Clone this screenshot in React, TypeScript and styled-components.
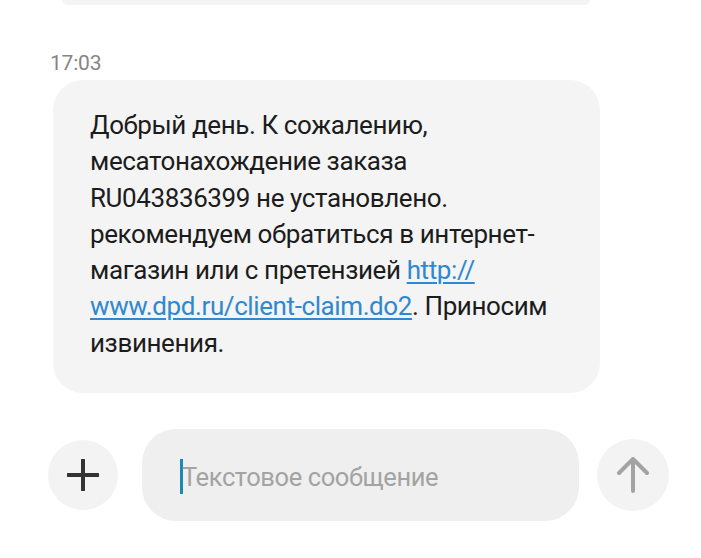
import React from "react";
import styled, { createGlobalStyle } from "styled-components";

const Global = createGlobalStyle`
  html, body { margin: 0; padding: 0; background: #ffffff; }
  body { font-family: Roboto, "Noto Sans", Arial, sans-serif; overflow: hidden; }
`;

const Screen = styled.div`
  width: 701px;
  height: 558px;
  display: flex;
  flex-direction: column;
  background: #ffffff;
`;

const PrevBubble = styled.div`
  margin-left: 62px;
  width: 528px;
  height: 5px;
  background: #f4f4f4;
  border-radius: 0 0 28px 28px;
`;

const Time = styled.div`
  margin: 44px 0 0 50px;
  font-size: 21px;
  line-height: 28px;
  color: #858585;
  letter-spacing: -0.2px;
`;

const Bubble = styled.div`
  margin: 3px 0 0 53px;
  width: 547px;
  box-sizing: border-box;
  height: 313px;
  padding: 27px 47px 0 37px;
  background: #f4f4f4;
  border-radius: 30px;
  font-size: 26px;
  line-height: 36.3px;
  color: #1c1c1c;
  letter-spacing: -0.4px;
`;

const Link = styled.a`
  color: #2f88d0;
  text-decoration: underline;
  text-underline-offset: 3px;
  text-decoration-thickness: 1.5px;
`;

const InputRow = styled.div`
  margin-top: 36px;
  display: flex;
  align-items: center;
  padding-left: 48px;
`;

const RoundButton = styled.div<{ $size: number }>`
  width: ${(p) => p.$size}px;
  height: ${(p) => p.$size}px;
  border-radius: 50%;
  background: #f3f3f3;
  display: flex;
  align-items: center;
  justify-content: center;
  flex-shrink: 0;
`;

const Field = styled.div`
  margin: 0 18px 0 24px;
  width: 437px;
  height: 92px;
  box-sizing: border-box;
  border-radius: 34px;
  background: #efefef;
  display: flex;
  align-items: center;
  padding: 3px 0 0 38px;
`;

const Caret = styled.span`
  width: 3px;
  height: 35px;
  background: #1b8ab3;
  margin-right: -1px;
`;

const Placeholder = styled.span`
  font-size: 25.5px;
  color: #a3a3a3;
  letter-spacing: -0.4px;
`;

export default function App() {
  return (
    <>
      <Global />
      <Screen>
        <PrevBubble />
        <Time>17:03</Time>
        <Bubble>
          Добрый день. К сожалению, месатонахождение заказа RU043836399 не
          установлено. рекомендуем обратиться в интернет-магазин или с
          претензией <Link href="#">http://<wbr />www.dpd.ru/client-claim.do2</Link>.
          Приносим извинения.
        </Bubble>
        <InputRow>
          <RoundButton $size={70}>
            <svg width="32" height="32" viewBox="0 0 32 32">
              <path d="M16 1v30M1 16h30" stroke="#333" strokeWidth="4" strokeLinecap="round" />
            </svg>
          </RoundButton>
          <Field>
            <Caret />
            <Placeholder>Текстовое сообщение</Placeholder>
          </Field>
          <RoundButton $size={72}>
            <svg width="34" height="36" viewBox="0 0 34 36">
              <path d="M17 34V3M3 16L17 2l14 14" stroke="#a3a3a3" strokeWidth="4" fill="none" strokeLinecap="round" strokeLinejoin="round" />
            </svg>
          </RoundButton>
        </InputRow>
      </Screen>
    </>
  );
}
